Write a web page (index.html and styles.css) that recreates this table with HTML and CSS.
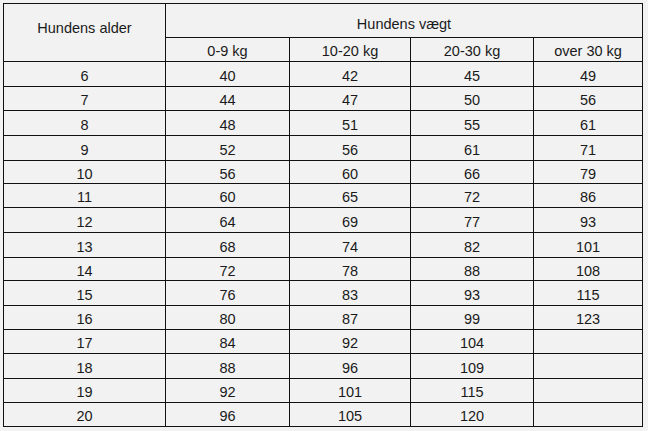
FILE: index.html
```html
<!DOCTYPE html>
<html lang="da">
<head>
<meta charset="utf-8">
<title>Hundens alder</title>
<link rel="stylesheet" href="styles.css">
</head>
<body>
<div class="table">
  <div class="cell h-age">Hundens alder</div>
  <div class="cell h-weight">Hundens vægt</div>
  <div class="cell h-sub">0-9 kg</div>
  <div class="cell h-sub">10-20 kg</div>
  <div class="cell h-sub">20-30 kg</div>
  <div class="cell h-sub">over 30 kg</div>

  <div class="cell">6</div><div class="cell">40</div><div class="cell">42</div><div class="cell">45</div><div class="cell">49</div>
  <div class="cell">7</div><div class="cell">44</div><div class="cell">47</div><div class="cell">50</div><div class="cell">56</div>
  <div class="cell">8</div><div class="cell">48</div><div class="cell">51</div><div class="cell">55</div><div class="cell">61</div>
  <div class="cell">9</div><div class="cell">52</div><div class="cell">56</div><div class="cell">61</div><div class="cell">71</div>
  <div class="cell">10</div><div class="cell">56</div><div class="cell">60</div><div class="cell">66</div><div class="cell">79</div>
  <div class="cell">11</div><div class="cell">60</div><div class="cell">65</div><div class="cell">72</div><div class="cell">86</div>
  <div class="cell">12</div><div class="cell">64</div><div class="cell">69</div><div class="cell">77</div><div class="cell">93</div>
  <div class="cell">13</div><div class="cell">68</div><div class="cell">74</div><div class="cell">82</div><div class="cell">101</div>
  <div class="cell">14</div><div class="cell">72</div><div class="cell">78</div><div class="cell">88</div><div class="cell">108</div>
  <div class="cell">15</div><div class="cell">76</div><div class="cell">83</div><div class="cell">93</div><div class="cell">115</div>
  <div class="cell">16</div><div class="cell">80</div><div class="cell">87</div><div class="cell">99</div><div class="cell">123</div>
  <div class="cell">17</div><div class="cell">84</div><div class="cell">92</div><div class="cell">104</div><div class="cell"></div>
  <div class="cell">18</div><div class="cell">88</div><div class="cell">96</div><div class="cell">109</div><div class="cell"></div>
  <div class="cell">19</div><div class="cell">92</div><div class="cell">101</div><div class="cell">115</div><div class="cell"></div>
  <div class="cell">20</div><div class="cell">96</div><div class="cell">105</div><div class="cell">120</div><div class="cell"></div>
</div>
</body>
</html>
```

FILE: styles.css
```css
html, body {
  margin: 0;
  padding: 0;
  background: #f2f2f2;
}

body {
  padding: 3px 0 0 3px;
  font-family: "Liberation Sans", Arial, sans-serif;
  font-size: 14.5px;
  color: #1a1a1a;
}

.table {
  display: inline-grid;
  background: #111;
  padding: 1px;
  gap: 1px;
  grid-template-columns: 161px 123px 120px 122px 108px;
  grid-template-rows: 33px 23px 24px 23px 24px 24px 22px 23px 24px 24px 22px 24px 23px 23px 24px 23px 23px;
}

.cell {
  background: #f2f2f2;
  display: flex;
  justify-content: center;
  align-items: center;
  line-height: 16px;
  padding-top: 3px;
  box-sizing: border-box;
}

.h-age {
  grid-row: 1 / span 2;
  align-items: flex-start;
  padding: 16px 0 0 0;
}

.h-weight {
  grid-column: 2 / span 4;
  align-items: flex-start;
  padding: 12px 0 0 0;
}

.h-sub {
  align-items: flex-start;
  padding: 5px 0 0 0;
}
```
